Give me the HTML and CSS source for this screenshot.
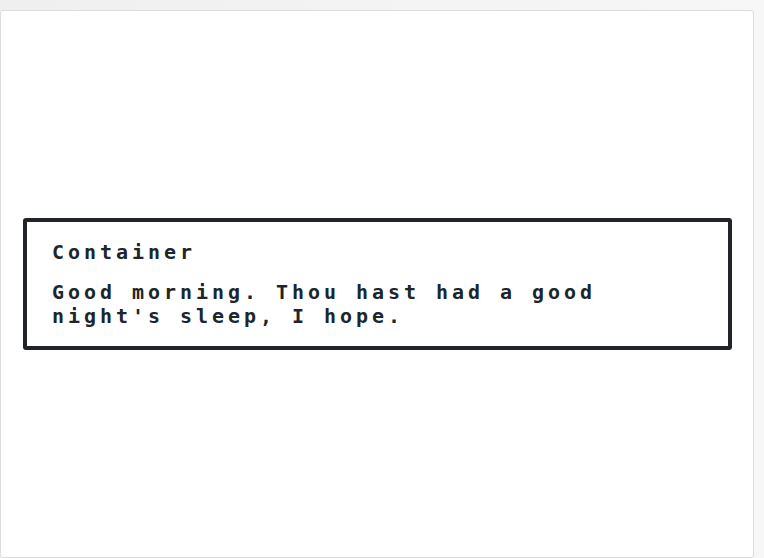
FILE: index.html
```html
<!DOCTYPE html>
<html lang="en">
<head>
<meta charset="utf-8">
<title>Container</title>
<link rel="stylesheet" href="styles.css">
</head>
<body>
<main class="card">
  <section class="nes-container">
    <p class="title">Container</p>
    <p class="message">Good morning. Thou hast had a good night's sleep, I hope.</p>
  </section>
</main>
</body>
</html>
```

FILE: styles.css
```css
html, body {
  margin: 0;
  padding: 0;
}
body {
  width: 764px;
  height: 558px;
  overflow: hidden;
  background: linear-gradient(to right, #efefef, #f7f7f7);
  padding-top: 10px;
  box-sizing: border-box;
}
.card {
  box-sizing: border-box;
  width: 754px;
  height: 548px;
  background: #fff;
  border: 1px solid #dcdcdc;
  border-radius: 3px;
  display: flex;
  align-items: center;
  padding: 0 21px 0 22px;
}
.nes-container {
  flex: 1;
  box-sizing: border-box;
  border: 4px solid #212529;
  border-radius: 3px;
  padding: 18px 24px 18px 25px;
  color: #212529;
  font-family: "DejaVu Sans Mono", "Liberation Mono", monospace;
  font-weight: bold;
  font-size: 20px;
  line-height: 24px;
  letter-spacing: 3.96px;
}
.nes-container p {
  margin: 0;
}
.nes-container .title {
  margin-bottom: 16px;
}
```
